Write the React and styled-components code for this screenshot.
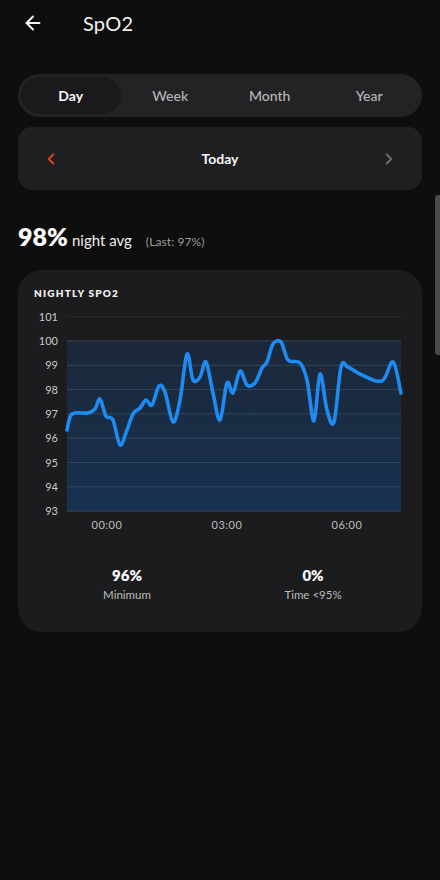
import React from "react";
import styled, { createGlobalStyle } from "styled-components";
import { ArrowLeft, ChevronLeft, ChevronRight } from "lucide-react";

const Global = createGlobalStyle`
  html, body {
    margin: 0;
    background: #0e0e0e;
  }
  body {
    font-family: Lato, "Noto Sans", sans-serif;
    color: #fff;
  }
`;

const Page = styled.div`
  position: relative;
  width: 440px;
  height: 880px;
  overflow: hidden;
  padding: 0 18px;
  box-sizing: border-box;
  background: #0e0e0e;
`;

const Header = styled.div`
  height: 46px;
  display: flex;
  align-items: center;
  padding-left: 4px;
`;

const BackButton = styled.button`
  all: unset;
  display: flex;
  color: #f4f4f4;
  width: 22px;
  height: 22px;
`;

const Title = styled.h1`
  margin: 0 0 0 39px;
  font-size: 20px;
  font-weight: 400;
  color: #f2f2f2;
  letter-spacing: 0.2px;
`;

const Segmented = styled.div`
  margin-top: 28px;
  height: 43px;
  border-radius: 22px;
  background: #232325;
  display: grid;
  grid-template-columns: repeat(4, 1fr);
  padding: 3px;
  box-sizing: border-box;
`;

const Tab = styled.div`
  display: flex;
  align-items: center;
  justify-content: center;
  border-radius: 19px;
  font-size: 14px;
  font-weight: ${(p) => (p.$active ? 700 : 500)};
  color: ${(p) => (p.$active ? "#f6f6f6" : "#b9b6b8")};
  background: ${(p) => (p.$active ? "#1a1a1c" : "transparent")};
`;

const DateCard = styled.div`
  margin-top: 10px;
  height: 63px;
  border-radius: 14px;
  background: #1f1f21;
  display: flex;
  align-items: center;
  justify-content: space-between;
  padding: 0 24px;
  box-sizing: border-box;
`;

const Arrow = styled.span`
  display: flex;
  color: ${(p) => p.$color};
`;

const DateLabel = styled.span`
  font-size: 14px;
  font-weight: 700;
  color: #f5f5f5;
`;

const Summary = styled.div`
  margin-top: 25px;
  height: 43px;
  display: flex;
  align-items: baseline;
  padding-top: 6px;
  box-sizing: border-box;
`;

const Big = styled.span`
  font-size: 25px;
  font-weight: 800;
  color: #fafafa;
`;

const Unit = styled.span`
  margin-left: 4px;
  font-size: 15px;
  color: #ececec;
`;

const Last = styled.span`
  margin-left: 14px;
  font-size: 12px;
  color: #9c9c9c;
  letter-spacing: 0.1px;
`;

const ChartCard = styled.div`
  margin-top: 12px;
  height: 362px;
  border-radius: 24px;
  background: #1c1c1e;
  padding: 17px 16px 0;
  box-sizing: border-box;
`;

const CardTitle = styled.div`
  font-size: 10px;
  line-height: 12px;
  font-weight: 800;
  letter-spacing: 1.2px;
  color: #eeeeee;
`;

const ChartSvg = styled.svg`
  display: block;
  margin: 6px -16px 0;
`;

const Stats = styled.div`
  margin-top: 31px;
  display: grid;
  grid-template-columns: 1fr 1fr;
`;

const Stat = styled.div`
  display: flex;
  flex-direction: column;
  align-items: center;
  gap: 4px;
`;

const StatValue = styled.div`
  font-size: 15px;
  line-height: 18px;
  font-weight: 800;
  color: #f6f6f6;
`;

const StatLabel = styled.div`
  font-size: 11.5px;
  line-height: 14px;
  color: #bdbdbd;
`;

const Scrollbar = styled.div`
  position: absolute;
  right: 0;
  top: 195px;
  width: 5px;
  height: 160px;
  border-radius: 3px 0 0 3px;
  background: #4a4a4c;
`;

const points = [
  [67, 430], [72, 414], [88, 413], [95, 409], [100, 399], [106, 416],
  [113, 420], [120, 445], [127, 430], [133, 414], [140, 408], [146, 400],
  [152, 405], [159, 386], [165, 392], [173, 422], [180, 400], [187, 354],
  [193, 380], [200, 377], [206, 362], [213, 393], [220, 420], [227, 383],
  [233, 393], [240, 371], [247, 385], [255, 383], [262, 368], [267, 362],
  [273, 344], [281, 342], [288, 360], [300, 363], [307, 380], [314, 421],
  [320, 374], [327, 410], [334, 422], [341, 367], [348, 367], [362, 375],
  [382, 381], [393, 362], [401, 393],
];

const smoothPath = (pts) => {
  let d = `M${pts[0][0]},${pts[0][1]}`;
  for (let i = 0; i < pts.length - 1; i++) {
    const p0 = pts[i - 1] || pts[i];
    const p1 = pts[i];
    const p2 = pts[i + 1];
    const p3 = pts[i + 2] || p2;
    const c1x = p1[0] + (p2[0] - p0[0]) / 6;
    const c1y = p1[1] + (p2[1] - p0[1]) / 6;
    const c2x = p2[0] - (p3[0] - p1[0]) / 6;
    const c2y = p2[1] - (p3[1] - p1[1]) / 6;
    d += ` C${c1x},${c1y} ${c2x},${c2y} ${p2[0]},${p2[1]}`;
  }
  return d;
};

const yTicks = [101, 100, 99, 98, 97, 96, 95, 94, 93];
const yFor = (v) => 341 + (100 - v) * 24.3;
const xTicks = [
  ["00:00", 107],
  ["03:00", 227],
  ["06:00", 347],
];

const Chart = () => (
  <ChartSvg width="404" height="230" viewBox="18 305 404 230">
    <defs>
      <linearGradient id="fill" x1="0" y1="0" x2="0" y2="1">
        <stop offset="0" stopColor="#1c2839" />
        <stop offset="1" stopColor="#163150" />
      </linearGradient>
    </defs>
    <rect x="67" y={yFor(100)} width="334" height={yFor(93) - yFor(100)} fill="url(#fill)" />
    {yTicks.map((v) => (
      <g key={v}>
        <line
          x1="67"
          x2="401"
          y1={yFor(v)}
          y2={yFor(v)}
          stroke={v === 101 ? "#2b2b2f" : "#33455a"}
          strokeWidth="1"
        />
        <text
          x="58"
          y={yFor(v) + 4}
          textAnchor="end"
          fontSize="11"
          fill="#c9c9c9"
          fontFamily="Lato, sans-serif"
        >
          {v}
        </text>
      </g>
    ))}
    {xTicks.map(([t, x]) => (
      <text
        key={t}
        x={x}
        y="529"
        textAnchor="middle"
        fontSize="11"
        fill="#bdbdbd"
        fontFamily="Lato, sans-serif"
        letterSpacing="0.5"
      >
        {t}
      </text>
    ))}
    <path
      d={smoothPath(points)}
      fill="none"
      stroke="#1e8bf3"
      strokeWidth="3.6"
      strokeLinejoin="round"
      strokeLinecap="round"
    />
  </ChartSvg>
);

const tabs = ["Day", "Week", "Month", "Year"];

const App = () => (
  <Page>
    <Global />
    <Header>
      <BackButton>
        <ArrowLeft size={22} strokeWidth={2.2} />
      </BackButton>
      <Title>SpO2</Title>
    </Header>
    <Segmented>
      {tabs.map((t) => (
        <Tab key={t} $active={t === "Day"}>
          {t}
        </Tab>
      ))}
    </Segmented>
    <DateCard>
      <Arrow $color="#dc4219">
        <ChevronLeft size={18} strokeWidth={2.6} />
      </Arrow>
      <DateLabel>Today</DateLabel>
      <Arrow $color="#6f6f72">
        <ChevronRight size={18} strokeWidth={2.4} />
      </Arrow>
    </DateCard>
    <Summary>
      <Big>98%</Big>
      <Unit>night avg</Unit>
      <Last>(Last: 97%)</Last>
    </Summary>
    <ChartCard>
      <CardTitle>NIGHTLY SPO2</CardTitle>
      <Chart />
      <Stats>
        <Stat>
          <StatValue>96%</StatValue>
          <StatLabel>Minimum</StatLabel>
        </Stat>
        <Stat>
          <StatValue>0%</StatValue>
          <StatLabel>Time &lt;95%</StatLabel>
        </Stat>
      </Stats>
    </ChartCard>
    <Scrollbar />
  </Page>
);

export default App;
